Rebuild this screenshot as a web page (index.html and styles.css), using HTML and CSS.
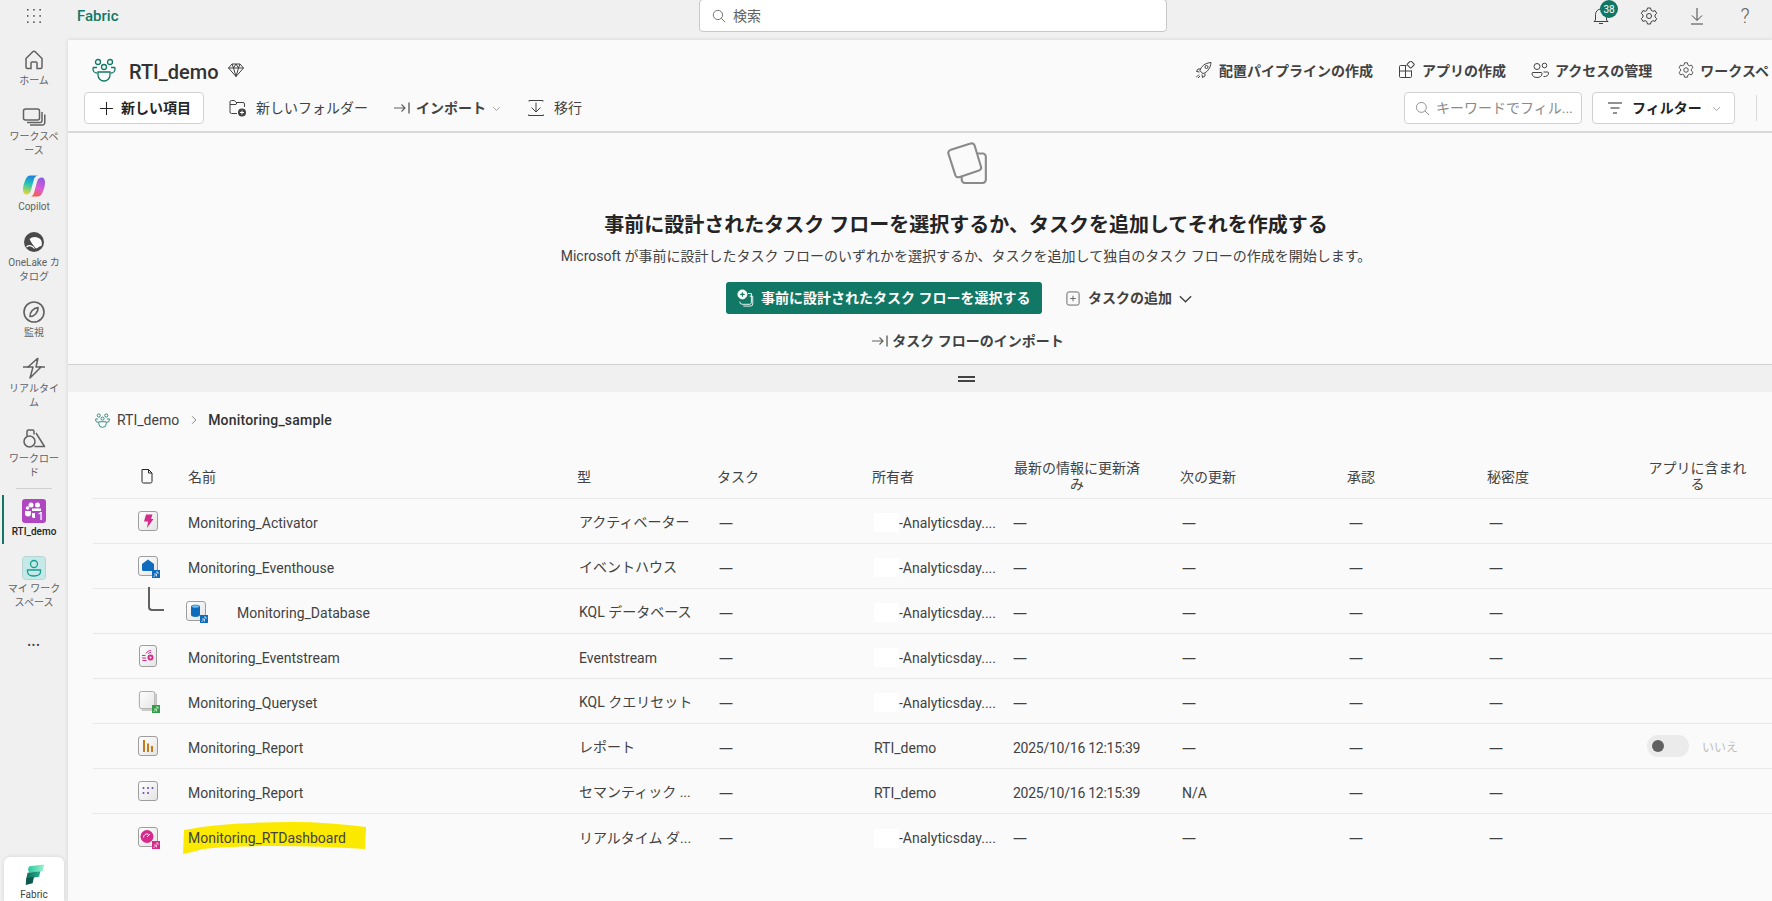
FILE: index.html
```html
<!DOCTYPE html>
<html lang="ja">
<head>
<meta charset="utf-8">
<title>Fabric - RTI_demo</title>
<link rel="stylesheet" href="styles.css">
</head>
<body>
<svg class="sprite" aria-hidden="true">
  <defs>
    <linearGradient id="cpA" x1="0.5" y1="0" x2="0.3" y2="1"><stop offset="0" stop-color="#1b7fe0"/><stop offset=".45" stop-color="#23c7b5"/><stop offset="1" stop-color="#e6d73a"/></linearGradient>
    <linearGradient id="cpB" x1="0.8" y1="0" x2="0.3" y2="1"><stop offset="0" stop-color="#8a5ce6"/><stop offset=".55" stop-color="#e05bd0"/><stop offset="1" stop-color="#f2603a"/></linearGradient>
    <linearGradient id="fbA" x1="0" y1="0" x2="1" y2="0"><stop offset="0" stop-color="#2ac9a0"/><stop offset="1" stop-color="#9af0cf"/></linearGradient>
    <linearGradient id="fbB" x1="0" y1="0" x2="1" y2="0"><stop offset="0" stop-color="#0c6b57"/><stop offset="1" stop-color="#27b08f"/></linearGradient>
    <linearGradient id="tile" x1="0" y1="0" x2="1" y2="1"><stop offset="0" stop-color="#ffffff"/><stop offset="1" stop-color="#e4e4e4"/></linearGradient>
  </defs>
  <symbol id="i-grid" viewBox="0 0 16 16"><g fill="currentColor"><rect x="1" y="1" width="1.5" height="1.5"/><rect x="7.2" y="1" width="1.5" height="1.5"/><rect x="13.4" y="1" width="1.5" height="1.5"/><rect x="1" y="7.2" width="1.5" height="1.5"/><rect x="7.2" y="7.2" width="1.5" height="1.5"/><rect x="13.4" y="7.2" width="1.5" height="1.5"/><rect x="1" y="13.4" width="1.5" height="1.5"/><rect x="7.2" y="13.4" width="1.5" height="1.5"/><rect x="13.4" y="13.4" width="1.5" height="1.5"/></g></symbol>
  <symbol id="i-search" viewBox="0 0 16 16"><g fill="none" stroke="currentColor" stroke-width="1"><circle cx="6.8" cy="6.8" r="5.3"/><path d="m10.6 10.6 4.4 4.4"/></g></symbol>
  <symbol id="i-bell" viewBox="0 0 20 20"><path d="M4.5 14V8.5a5.5 5.5 0 0 1 11 0V14l1.500 1.500h-14zM8 17.500h4" fill="none" stroke="currentColor"/></symbol>
  <symbol id="i-gear" viewBox="0 0 20 20"><g fill="none" stroke="currentColor"><circle cx="10" cy="10" r="2.500"/><path d="M8.400 2h3.200l.5 2.300 1.700 1 2.300-.7 1.600 2.800-1.700 1.600v2l1.700 1.600-1.600 2.800-2.300-.7-1.700 1-.5 2.300H8.400l-.5-2.300-1.700-1-2.300.7-1.600-2.800 1.700-1.600v-2L2.300 7.400l1.600-2.800 2.300.7 1.700-1z" stroke-linejoin="round"/></g></symbol>
  <symbol id="i-down" viewBox="0 0 20 20"><path d="M10 2v12M5 9.500l5 5 5-5M4 18h12" fill="none" stroke="currentColor"/></symbol>
  <symbol id="i-home" viewBox="0 0 24 24"><path d="M4 10.500 10.500 4a2.200 2.200 0 0 1 3 0L20 10.500V19a1.500 1.500 0 0 1-1.500 1.500H15V15a1 1 0 0 0-1-1h-4a1 1 0 0 0-1 1v5.500H5.500A1.500 1.500 0 0 1 4 19z" fill="none" stroke="currentColor" stroke-width="1.500"/></symbol>
  <symbol id="i-stack" viewBox="0 0 24 24"><g fill="none" stroke="currentColor" stroke-width="1.500"><rect x="1.500" y="5" width="16" height="11" rx="2"/><path d="M20 8v8.500a2 2 0 0 1-2 2H5M22.800 10.500v8a2.500 2.500 0 0 1-2.500 2.500H8"/></g></symbol>
  <symbol id="i-copilot" viewBox="0 0 24 24"><path d="M8 1.500h8.500c-2.400 0-3.700 1.200-4.500 3.600L8.800 16.800C8 19.300 6.600 20.500 4.400 20.500 2 20.500 1 18.500 1 15.500 1 11.500 2.500 7.500 4 4.500 5.200 2.500 6.500 1.500 8 1.500Z" fill="url(#cpA)"/><path d="M16 22.500H7.500c2.400 0 3.700-1.200 4.500-3.600l3.200-11.700C16 4.700 17.400 3.500 19.600 3.500 22 3.500 23 5.500 23 8.500 23 12.500 21.500 16.500 20 19.500 18.800 21.500 17.500 22.500 16 22.500Z" fill="url(#cpB)"/></symbol>
  <symbol id="i-lake" viewBox="0 0 24 24"><circle cx="12" cy="12" r="10" fill="#4a4a4a"/><path d="M7.500 9c3-2.500 8-3 11.500 1 1 1.500 1 4 .5 6-2 0-3.500 2-5.500 2.500-2.500-3-5-6-6.500-9.500Z" fill="#fff"/><path d="M4.500 17c3-2.500 6-1 8 1.500" fill="none" stroke="#fff" stroke-width="1.200"/></symbol>
  <symbol id="i-monitor" viewBox="0 0 24 24"><g fill="none" stroke="currentColor" stroke-width="1.600"><circle cx="12" cy="12" r="10"/><path d="M8 16.500c-.5-4 3-8.500 8-9 .5 4.500-3.500 9-8 9Z"/></g></symbol>
  <symbol id="i-bolt" viewBox="0 0 24 24"><g fill="none" stroke="currentColor" stroke-width="1.500" stroke-linejoin="round"><path d="M16 2 6 11h5L8 22l11-11h-5l2-9"/><path d="M1 11h6M17 11h6"/></g></symbol>
  <symbol id="i-shapes" viewBox="0 0 24 24"><g fill="none" stroke="currentColor" stroke-width="1.500" stroke-linejoin="round"><circle cx="7.500" cy="15.500" r="5.500"/><path d="M5 10V5.500A1.500 1.500 0 0 1 6.500 4h4A1.500 1.500 0 0 1 12 5.500v3"/><path d="m14 7 8.500 13.500H12.500"/></g></symbol>
  <symbol id="i-ws" viewBox="0 0 24 24"><g fill="none" stroke="#117865" stroke-width="1.300"><circle cx="6" cy="4" r="2.500"/><circle cx="18" cy="4" r="2.500"/><circle cx="12" cy="9" r="2.500"/><path d="M1 9.500h4M19 9.500h4M1 9.500v1.500a4 4 0 0 0 4 4M23 9.500v1.500a4 4 0 0 1-4 4"/><path d="M6 14h12v3a6 6 0 0 1-6 6 6 6 0 0 1-6-6z"/></g></symbol>
  <symbol id="i-diamond" viewBox="0 0 16 16"><path d="M4 2h8l3.500 4L8 14.500.5 6zM.5 6h15M5.500 6 8 14.500 10.500 6 8 2 5.500 6M4 2l1.500 4M12 2l-1.500 4" fill="none" stroke="currentColor" stroke-linejoin="round"/></symbol>
  <symbol id="i-plus" viewBox="0 0 16 16"><path d="M8 1v14M1 8h14" stroke="currentColor" fill="none" stroke-width="1.100"/></symbol>
  <symbol id="i-folder" viewBox="0 0 18 18"><path d="M8 14.500H2.500A1.500 1.500 0 0 1 1 13V3a1.500 1.500 0 0 1 1.500-1.500h3L7 3.500h7A1.500 1.500 0 0 1 15.500 5v3M1 5.500h6L8 3.500" fill="none" stroke="currentColor"/><circle cx="13" cy="13.500" r="4" fill="#424242"/><path d="M13 11.500v4M11 13.500h4" stroke="#fff"/></symbol>
  <symbol id="i-import" viewBox="0 0 16 16"><path d="M0 8h11M7.500 4.500 11 8l-3.500 3.500" fill="none" stroke="#616161" stroke-width="1.200"/><path d="M15 2.500v11" stroke="#242424"/></symbol>
  <symbol id="i-chev" viewBox="0 0 16 16"><path d="m2 5.500 6 6 6-6" fill="none" stroke="currentColor" stroke-width="1"/></symbol>
  <symbol id="i-chev-b" viewBox="0 0 16 16"><path d="m2 5.500 6 6 6-6" fill="none" stroke="currentColor" stroke-width="1.500"/></symbol>
  <symbol id="i-migrate" viewBox="0 0 18 18"><path d="M2 1.500h14M2 1.500v1M16 1.500v1M9 3.500V13M4.500 8.500 9 13l4.500-4.500M1.500 16.500h15M1.500 16.500v-1M16.500 16.500v-1" fill="none" stroke="currentColor"/></symbol>
  <symbol id="i-rocket" viewBox="0 0 18 18"><g fill="none" stroke="currentColor"><path d="M6.500 11.500 5 9.500c1-4 5-7.500 11-8-.5 6-4 10-8 11z"/><circle cx="11.500" cy="6" r="1.500"/><path d="M5.500 8H3l-1.500 2.500L4.500 11M10 12.500v2.500L7.500 16.500 7 13.500M1 16.500l3-3M3 17l2-2"/></g></symbol>
  <symbol id="i-app" viewBox="0 0 18 18"><g fill="none" stroke="currentColor"><path d="M8.500 4.500H2.500A1 1 0 0 0 1.500 5.500v10a1 1 0 0 0 1 1h10a1 1 0 0 0 1-1V9.500M1.500 10h12M7.500 4.500v12"/><rect x="10" y="0.800" width="5.500" height="5.500" rx="1" transform="rotate(45 12.800 3.500)"/></g></symbol>
  <symbol id="i-people" viewBox="0 0 18 18"><g fill="none" stroke="currentColor"><circle cx="6" cy="5.500" r="3"/><circle cx="13.500" cy="4.500" r="2.300"/><path d="M1 12.500a1 1 0 0 1 1-1h8a1 1 0 0 1 1 1c0 2.500-2 4-5 4s-5-1.500-5-4ZM12.500 15.500c3 .3 5-1 5-3.500a1 1 0 0 0-1-1h-4"/></g></symbol>
  <symbol id="i-filter" viewBox="0 0 16 16"><path d="M1 3h14M3.500 8h9M6 13h4" stroke="currentColor" fill="none"/></symbol>
  <symbol id="i-pages" viewBox="0 0 40 40"><g fill="none" stroke="#8a8a8a" stroke-width="2"><path d="M26 11h8a3 3 0 0 1 3 3v22a3 3 0 0 1-3 3H17a3 3 0 0 1-3-3v-3"/><path d="M3 7.700 22.500 1.500a3 3 0 0 1 3.800 1.800l6 20a3 3 0 0 1-1.800 3.800L11.500 33.500A3 3 0 0 1 8 31.700L1.500 11.500A3 3 0 0 1 3 7.700Z" fill="#fafafa"/></g></symbol>
  <symbol id="i-flow" viewBox="0 0 20 20"><g fill="none" stroke="#fff"><circle cx="6" cy="6" r="5" fill="#fff"/><path d="M6 3.500v5M3.500 6h5" stroke="#117865" stroke-width="1.300"/><path d="M12 5h4v10a2 2 0 0 1-2 2H6a3 3 0 0 1-3-3M14 8h3.500v8.500a2.500 2.500 0 0 1-2.500 2.500H7"/></g></symbol>
  <symbol id="i-addtask" viewBox="0 0 14 16"><g fill="none" stroke="currentColor"><rect x="0.500" y="1" width="13" height="14" rx="2"/><path d="M7 5v6M4 8h6"/></g></symbol>
  <symbol id="i-file" viewBox="0 0 16 16"><path d="M3 1.500h6.500L13 5v8.500a1.500 1.500 0 0 1-1.500 1.500h-7A1.500 1.500 0 0 1 3 13.500zM9.500 1.500V5H13" fill="none" stroke="#242424" stroke-width="1"/></symbol>
  <symbol id="i-chevr" viewBox="0 0 16 16"><path d="m5 2 6 6-6 6" fill="none" stroke="currentColor"/></symbol>
  <symbol id="i-me" viewBox="0 0 24 24"><rect x=".5" y=".5" width="23" height="23" rx="3" fill="#c5e9e7" stroke="#b5d6d4"/><g fill="none" stroke="#1a9c94" stroke-width="1.300"><circle cx="12" cy="8" r="3.500"/><path d="M5.500 14h13v1.500c0 3-3 4.500-6.500 4.500s-6.500-1.500-6.500-4.500z"/></g></symbol>
  <symbol id="i-fabric" viewBox="0 0 24 24"><path d="M7 2.500 23 0.500l-1.500 7L7 9.500a5 5 0 0 1 0-7Z" fill="url(#fbA)"/><path d="M5 9.500 19 8l-1.500 6L3.500 16Z" fill="url(#fbB)"/><path d="M3.500 15.500 12 14l-1.500 7-7.500 2Z" fill="#0b5a4c"/></symbol>
  <symbol id="b-tile" viewBox="0 0 20 20"><rect x=".5" y=".5" width="19" height="19" rx="2.500" fill="url(#tile)" stroke="#9e9e9e"/></symbol>
  <symbol id="t-activator" viewBox="0 0 20 20"><use href="#b-tile"/><path d="M8 3.500h6.500l-1.500 4.500H15.500l-6.500 9 1-6.500H6z" fill="#d52c8c"/></symbol>
  <symbol id="t-house" viewBox="0 0 20 20"><use href="#b-tile"/><path d="M10 3.500 16 8v5.500q0 1.500-1.500 1.500h-9Q4 15 4 13.500V8z" fill="#0f6cbd"/></symbol>
  <symbol id="t-db" viewBox="0 0 20 20"><use href="#b-tile"/><path d="M5 5.500c0-2.500 9-2.500 9 0V14c0 2.500-9 2.500-9 0z" fill="#0f6cbd"/><ellipse cx="9.500" cy="5.500" rx="3.500" ry="1.200" fill="#6fc0f0"/></symbol>
  <symbol id="t-stream" viewBox="0 0 18 22"><rect x=".5" y=".5" width="17" height="21" rx="2.500" fill="url(#tile)" stroke="#9e9e9e"/><g fill="none" stroke="#d52c8c"><path d="M3 13h4M3 10.500h3.500M3.500 15.500h4M7 8.500c1-2 3-3 5-3M9 9c.5-1 1.500-1.500 3-1.500"/></g><circle cx="11.500" cy="12.500" r="3" fill="#d52c8c"/><circle cx="11.500" cy="12.500" r="1" fill="#fff"/></symbol>
  <symbol id="t-query" viewBox="0 0 20 22"><path d="M3 21h14a2 2 0 0 0 2-2V3" fill="none" stroke="#9e9e9e"/><rect x=".5" y=".5" width="17" height="19" rx="2.500" fill="url(#tile)" stroke="#9e9e9e"/></symbol>
  <symbol id="t-report" viewBox="0 0 20 20"><use href="#b-tile"/><g fill="#c27c1a"><rect x="5" y="4" width="2" height="12"/><rect x="9" y="7.500" width="2" height="8.500"/><rect x="13" y="10" width="2" height="6"/></g></symbol>
  <symbol id="t-model" viewBox="0 0 20 20"><use href="#b-tile"/><g fill="#6b45bc"><circle cx="5.500" cy="7" r="1"/><circle cx="10" cy="7" r="1"/><circle cx="14.500" cy="7" r="1"/><circle cx="5.500" cy="12" r="1"/><circle cx="10" cy="12" r="1"/></g></symbol>
  <symbol id="t-dash" viewBox="0 0 20 20"><use href="#b-tile"/><circle cx="9" cy="9.500" r="6.500" fill="#d52c8c"/><path d="M5.500 10.500a3.500 3.500 0 0 1 5-3.200M9 10l3-3" fill="none" stroke="#fff"/></symbol>
  <symbol id="t-link" viewBox="0 0 8 8"><rect width="8" height="8" fill="currentColor"/><path d="M1.500 7 4 4.500M2 4h2.500v2.500M4 2h2v2" stroke="#fff" fill="none" stroke-width=".7"/></symbol>
</svg>

<header class="topbar">
  <span class="waffle"><svg class="ic16"><use href="#i-grid"/></svg></span>
  <span class="brand">Fabric</span>
  <div class="global-search"><svg class="ic14"><use href="#i-search"/></svg><span class="up">検索</span></div>
  <div class="top-icons">
    <span class="top-icon bell"><svg class="ic20"><use href="#i-bell"/></svg><b class="badge">38</b></span>
    <span class="top-icon"><svg class="ic20"><use href="#i-gear"/></svg></span>
    <span class="top-icon"><svg class="ic20"><use href="#i-down"/></svg></span>
    <span class="top-icon help">?</span>
  </div>
</header>

<div class="shell">
  <nav class="rail">
    <a class="rail-item"><svg class="ic24"><use href="#i-home"/></svg><span>ホーム</span></a>
    <a class="rail-item"><svg class="ic24"><use href="#i-stack"/></svg><span>ワークスペ<br>ース</span></a>
    <a class="rail-item"><svg class="ic24"><use href="#i-copilot"/></svg><span>Copilot</span></a>
    <a class="rail-item"><svg class="ic24"><use href="#i-lake"/></svg><span>OneLake カ<br>タログ</span></a>
    <a class="rail-item"><svg class="ic24"><use href="#i-monitor"/></svg><span>監視</span></a>
    <a class="rail-item"><svg class="ic24"><use href="#i-bolt"/></svg><span>リアルタイ<br>ム</span></a>
    <a class="rail-item"><svg class="ic24"><use href="#i-shapes"/></svg><span>ワークロー<br>ド</span></a>
    <hr class="rail-sep">
    <a class="rail-item active">
      <svg class="ic24" viewBox="0 0 24 24"><rect width="24" height="24" rx="3" fill="#b146c2"/><g fill="#fff"><circle cx="9" cy="6" r="2.500"/><circle cx="15.500" cy="6" r="2.500"/><circle cx="5.500" cy="9" r="1.800"/><path d="M3 12h6v2.500a3 3 0 0 1-6 0zM10 9.500h9v2.500h-9zM10 14h3v5h-2a2 2 0 0 1-1-2z"/></g><text x="15.500" y="21" font-size="11" fill="#fff" font-family="Noto Sans">1</text></svg>
      <span>RTI_demo</span>
    </a>
    <a class="rail-item"><svg class="ic24"><use href="#i-me"/></svg><span>マイ ワーク<br>スペース</span></a>
    <a class="rail-more">•••</a>
    <a class="rail-fabric"><svg class="ic24"><use href="#i-fabric"/></svg><span>Fabric</span></a>
  </nav>

  <main class="main">
    <section class="head">
      <div class="title-row">
        <svg class="ic24"><use href="#i-ws"/></svg>
        <h1>RTI_demo</h1>
        <svg class="ic16 diamond"><use href="#i-diamond"/></svg>
        <div class="actions">
          <a class="action"><svg class="a-ic"><use href="#i-rocket"/></svg>配置パイプラインの作成</a>
          <a class="action"><svg class="a-ic"><use href="#i-app"/></svg>アプリの作成</a>
          <a class="action"><svg class="a-ic"><use href="#i-people"/></svg>アクセスの管理</a>
          <a class="action action-gear"><svg class="gear-lg"><use href="#i-gear"/></svg><span>ワークスペ</span></a>
        </div>
      </div>
      <div class="toolbar">
        <button class="btn-new"><svg class="ic15"><use href="#i-plus"/></svg><span class="up">新しい項目</span></button>
        <a class="tool"><svg class="ic18"><use href="#i-folder"/></svg><span class="up">新しいフォルダー</span></a>
        <a class="tool tool-b"><svg class="ic16"><use href="#i-import"/></svg><b class="up">インポート</b><svg class="chev"><use href="#i-chev"/></svg></a>
        <a class="tool"><svg class="ic18"><use href="#i-migrate"/></svg><span class="up">移行</span></a>
        <div class="filter-input"><svg class="ic15"><use href="#i-search"/></svg><span class="up">キーワードでフィル...</span></div>
        <button class="btn-filter"><svg class="ic16"><use href="#i-filter"/></svg><b class="up">フィルター</b><svg class="chev chev-f"><use href="#i-chev"/></svg></button>
        <span class="tool-sep"></span>
      </div>
    </section>

    <section class="flow">
      <svg class="flow-art"><use href="#i-pages"/></svg>
      <h2>事前に設計されたタスク フローを選択するか、タスクを追加してそれを作成する</h2>
      <p>Microsoft が事前に設計したタスク フローのいずれかを選択するか、タスクを追加して独自のタスク フローの作成を開始します。</p>
      <div class="flow-btns">
        <button class="btn-primary"><svg class="ic18"><use href="#i-flow"/></svg><span class="up">事前に設計されたタスク フローを選択する</span></button>
        <a class="btn-add"><svg class="add-ic"><use href="#i-addtask"/></svg><span class="up">タスクの追加</span><svg class="chev-lg"><use href="#i-chev-b"/></svg></a>
      </div>
      <a class="flow-import"><svg class="ic16"><use href="#i-import"/></svg>タスク フローのインポート</a>
    </section>

    <div class="resizer"><i></i></div>

    <section class="list">
      <div class="crumbs">
        <svg class="ic15"><use href="#i-ws"/></svg>
        <span>RTI_demo</span>
        <svg class="crumb-sep"><use href="#i-chevr"/></svg>
        <b>Monitoring_sample</b>
      </div>
      <div class="row row-head">
        <span class="c-icon"><svg class="ic16"><use href="#i-file"/></svg></span>
        <span>名前</span><span>型</span><span>タスク</span><span>所有者</span>
        <span class="wrap-h">最新の情報に更新済み</span>
        <span>次の更新</span><span>承認</span><span>秘密度</span>
        <span class="wrap-app">アプリに含まれる</span>
      </div>

      <div class="row">
        <span class="c-icon"><svg class="ic20"><use href="#t-activator"/></svg></span>
        <span class="l">Monitoring_Activator</span><span class="c">アクティベーター</span><span class="c l dash">—</span>
        <span class="c l owner"><i></i><em>-Analyticsday....</em></span><span class="l dash">—</span><span class="c l dash">—</span><span class="c l dash">—</span><span class="c l dash">—</span><span></span>
      </div>
      <div class="row">
        <span class="c-icon"><span class="linked blue"><svg class="ic20"><use href="#t-house"/></svg><svg class="lk"><use href="#t-link"/></svg></span></span>
        <span class="l">Monitoring_Eventhouse</span><span class="c">イベントハウス</span><span class="c l dash">—</span>
        <span class="c l owner"><i></i><em>-Analyticsday....</em></span><span class="l dash">—</span><span class="c l dash">—</span><span class="c l dash">—</span><span class="c l dash">—</span><span></span>
      </div>
      <div class="row row-sub">
        <i class="tree"></i>
        <span class="c-icon"><span class="linked blue"><svg class="ic20"><use href="#t-db"/></svg><svg class="lk"><use href="#t-link"/></svg></span></span>
        <span class="l sub-name">Monitoring_Database</span><span class="c">KQL データベース</span><span class="c l dash">—</span>
        <span class="c l owner"><i></i><em>-Analyticsday....</em></span><span class="l dash">—</span><span class="c l dash">—</span><span class="c l dash">—</span><span class="c l dash">—</span><span></span>
      </div>
      <div class="row">
        <span class="c-icon"><svg class="stream"><use href="#t-stream"/></svg></span>
        <span class="l">Monitoring_Eventstream</span><span class="c l">Eventstream</span><span class="c l dash">—</span>
        <span class="c l owner"><i></i><em>-Analyticsday....</em></span><span class="l dash">—</span><span class="c l dash">—</span><span class="c l dash">—</span><span class="c l dash">—</span><span></span>
      </div>
      <div class="row">
        <span class="c-icon"><span class="linked green"><svg class="ic20"><use href="#t-query"/></svg><svg class="lk"><use href="#t-link"/></svg></span></span>
        <span class="l">Monitoring_Queryset</span><span class="c">KQL クエリセット</span><span class="c l dash">—</span>
        <span class="c l owner"><i></i><em>-Analyticsday....</em></span><span class="l dash">—</span><span class="c l dash">—</span><span class="c l dash">—</span><span class="c l dash">—</span><span></span>
      </div>
      <div class="row">
        <span class="c-icon"><svg class="ic20"><use href="#t-report"/></svg></span>
        <span class="l">Monitoring_Report</span><span class="c">レポート</span><span class="c l dash">—</span>
        <span class="c l">RTI_demo</span><span class="l date">2025/10/16 12:15:39</span><span class="c l dash">—</span><span class="c l dash">—</span><span class="c l dash">—</span>
        <span class="toggle-cell"><span class="toggle"><i></i></span><small>いいえ</small></span>
      </div>
      <div class="row">
        <span class="c-icon"><svg class="ic20"><use href="#t-model"/></svg></span>
        <span class="l">Monitoring_Report</span><span class="c">セマンティック ...</span><span class="c l dash">—</span>
        <span class="c l">RTI_demo</span><span class="l date">2025/10/16 12:15:39</span><span class="c l">N/A</span><span class="c l dash">—</span><span class="c l dash">—</span><span></span>
      </div>
      <div class="row row-last">
        <span class="c-icon"><span class="linked pink"><svg class="ic20"><use href="#t-dash"/></svg><svg class="lk"><use href="#t-link"/></svg></span></span>
        <span class="l marked"><svg class="marker" viewBox="0 0 184 34" preserveAspectRatio="none"><path d="M1 9C30 3 70 1 110 1c25 0 50 2 73 5l-1 22c-30-2-60-3-90-3-30 0-55 1-72 3C12 30 6 32 0 33z" fill="#fce900"/></svg><span>Monitoring_RTDashboard</span></span>
        <span class="c">リアルタイム ダ...</span><span class="c l dash">—</span>
        <span class="c l owner"><i></i><em>-Analyticsday....</em></span><span class="l dash">—</span><span class="c l dash">—</span><span class="c l dash">—</span><span class="c l dash">—</span><span></span>
      </div>
    </section>
  </main>
</div>
</body>
</html>
```
FILE: styles.css
```css
* { box-sizing: border-box; }
html, body { margin: 0; height: 901px; overflow: hidden; }
body {
  background: #f0f0f0;
  color: #424242;
  font-family: Roboto, "Noto Sans CJK JP", sans-serif;
  font-size: 14px;
  display: flex;
  flex-direction: column;
}
h1, h2, p { margin: 0; }
a { color: inherit; }
svg { display: block; flex: none; }
.sprite { position: absolute; width: 0; height: 0; }
.ic14 { width: 14px; height: 14px; }
.ic15 { width: 15px; height: 15px; }
.ic16 { width: 16px; height: 16px; }
.ic18 { width: 18px; height: 18px; }
.ic20 { width: 20px; height: 20px; }
.ic24 { width: 24px; height: 24px; }
.chev { width: 9px; height: 9px; color: #616161; }
.up { padding-bottom: 2px; }

/* top bar */
.topbar { height: 40px; flex: none; display: flex; align-items: center; position: relative; padding-bottom: 8px; }
.waffle { width: 68px; display: flex; justify-content: center; color: #424242; }
.brand { margin-left: 9px; color: #117865; font-weight: 500; font-size: 15px; }
.global-search {
  position: absolute; left: 699px; top: -1px; width: 468px; height: 33px;
  background: #fff; border: 1px solid #c8c8c8; border-radius: 4px;
  display: flex; align-items: center; gap: 7px; padding-left: 12px; color: #616161;
}
.top-icons { margin-left: auto; display: flex; padding-right: 3px; }
.top-icon { width: 48px; height: 32px; display: flex; align-items: center; justify-content: center; color: #424242; position: relative; }
.top-icon.help { font-size: 20px; color: #616161; font-weight: 300; }
.badge {
  position: absolute; left: 23px; top: 0; width: 18px; height: 18px; border-radius: 50%;
  background: #117865; color: #fff; font-size: 10px; font-weight: 400;
  display: flex; align-items: center; justify-content: center;
}

/* shell */
.shell { flex: 1; display: flex; min-height: 0; }
.rail { width: 68px; flex: none; display: flex; flex-direction: column; align-items: center; padding-top: 8px; gap: 16px; height: 861px; }
.rail-item { width: 68px; display: flex; flex-direction: column; align-items: center; gap: 2px; color: #616161; font-size: 10px; line-height: 14px; text-align: center; position: relative; }
.rail-sep { width: 36px; height: 1px; border: 0; background: #d1d1d1; margin: -8px 0 -6px; flex: none; }
.rail-item.active { color: #242424; font-weight: 500; margin-bottom: 1px; }
.rail-item.active::before { content: ""; position: absolute; left: 2px; top: -4px; bottom: -5px; width: 2px; background: #117865; }
.rail-more { font-size: 10px; letter-spacing: 1px; color: #424242; margin-top: 13px; line-height: 14px; }
.rail-fabric { margin-top: auto; width: 60px; height: 44px; background: #fff; border-radius: 6px 6px 0 0; display: flex; flex-direction: column; align-items: center; padding-top: 7px; font-size: 10px; line-height: 13px; color: #424242; box-shadow: 0 0 4px rgba(0,0,0,.12); overflow: hidden; flex: none; }
.rail-fabric .ic24 { width: 22px; height: 22px; margin-bottom: 2px; }

/* main */
.main { flex: 1; min-width: 0; background: #fafafa; display: flex; flex-direction: column; box-shadow: 0 0 4px rgba(0,0,0,.12); overflow: hidden; }
.head { height: 93px; flex: none; border-bottom: 2px solid #d9d9d9; }
.title-row { height: 52px; display: flex; align-items: center; padding: 8px 0 0 24px; white-space: nowrap; }
h1 { font-size: 20px; font-weight: 500; margin: 4px 0 0 13px; color: #323232; line-height: 28px; }
.diamond { margin-left: 10px; color: #424242; }
.actions { margin-left: auto; width: 576px; flex: none; display: flex; gap: 26px; overflow: hidden; color: #424242; font-weight: 700; }
.action { display: flex; align-items: center; gap: 7px; flex: none; }
.a-ic { width: 18px; height: 18px; margin: 0 -1px; }
.action-gear { gap: 5px; margin-left: -1px; }
.gear-lg { width: 18px; height: 18px; }
.toolbar { height: 32px; display: flex; align-items: center; padding: 0 15px 0 16px; white-space: nowrap; }
.btn-new, .btn-filter { height: 32px; background: #fff; border: 1px solid #d1d1d1; border-radius: 4px; font: inherit; color: #242424; display: flex; align-items: center; }
.btn-new { width: 120px; padding-left: 14px; gap: 7px; font-weight: 700; margin-right: 25px; }
.tool { display: flex; align-items: center; gap: 9px; margin-right: 26px; color: #424242; }
.tool-b { gap: 6px; }
.tool b { color: #424242; }
.filter-input { margin-left: auto; width: 178px; height: 32px; background: #fff; border: 1px solid #d1d1d1; border-radius: 4px; display: flex; align-items: center; gap: 6px; padding-left: 10px; color: #8a8a8a; overflow: hidden; }
.btn-filter { width: 143px; margin-left: 10px; padding-left: 14px; gap: 9px; }
.chev-f { margin-left: 1px; }
.tool-sep { width: 1px; height: 26px; background: #d9d9d9; margin-left: 21px; }

/* task flow */
.flow { height: 231px; flex: none; display: flex; flex-direction: column; align-items: center; padding: 9px 0 0 92px; }
.flow-art { width: 42px; height: 42px; margin: 0 0 -2px 4px; }
.flow h2 { margin-top: 28px; font-size: 20px; line-height: 30px; font-weight: 700; color: #242424; white-space: nowrap; }
.flow p { margin-top: 5px; line-height: 22px; color: #424242; white-space: nowrap; }
.flow-btns { margin-top: 15px; display: flex; align-items: center; padding-right: 13px; }
.btn-primary { width: 316px; height: 32px; background: #117865; border: 0; border-radius: 3px; color: #fff; font: inherit; font-weight: 700; display: flex; align-items: center; gap: 6px; padding-left: 11px; white-space: nowrap; }
.btn-add { display: flex; align-items: center; margin-left: 24px; font-weight: 700; color: #424242; gap: 8px; }
.add-ic { width: 14px; height: 15px; color: #616161; }
.chev-lg { width: 15px; height: 15px; color: #424242; margin-left: -2px; }
.flow-import { margin-top: 17px; margin-left: 4px; display: flex; align-items: center; gap: 4px; font-weight: 700; color: #424242; line-height: 20px; }

.resizer { height: 28px; flex: none; background: #f0f0f0; border-top: 1px solid #d1d1d1; display: flex; align-items: center; justify-content: center; padding-left: 92px; }
.resizer i { display: block; width: 17px; height: 6px; border-top: 2px solid #424242; border-bottom: 2px solid #424242; }

/* list */
.list { flex: 1; padding: 11px 0 0 25px; min-height: 0; }
.crumbs { height: 32px; display: flex; align-items: center; padding: 2px 0 0 2px; gap: 7px; }
.crumb-sep { width: 10px; height: 10px; margin: 0 2px 0 3px; color: #424242; }
.crumbs b { font-weight: 500; color: #323232; letter-spacing: .2px; }
.row {
  display: grid;
  grid-template-columns: 95px 389px 140px 155px 141px 167px 167px 140px 158px 105px;
  height: 45px; align-items: center; border-bottom: 1px solid #e8e8e8;
  position: relative; white-space: nowrap; color: #424242;
}
.row-head { height: 50px; margin-top: 14px; padding-top: 4px; }
.row-last { border-bottom: 0; }
.l { padding-top: 3px; }
.c-icon { display: flex; padding-left: 45px; }
.row-head .c-icon { padding-left: 46px; }
.c { padding-left: 2px; }
.dash { font-family: "Noto Sans", sans-serif; line-height: 20px; }
.date { letter-spacing: -.25px; }
.wrap-h { width: 128px; white-space: normal; text-align: center; line-height: 16px; }
.wrap-app { white-space: normal; text-align: center; line-height: 16px; width: 105px; }
.owner { display: flex; align-items: center; }
.owner i { width: 25px; height: 19px; background: #fff; }
.owner em { font-style: normal; }
.stream { width: 18px; height: 22px; margin-left: 1px; }
.linked { position: relative; display: block; width: 20px; height: 20px; }
.lk { position: absolute; right: -2px; bottom: -2px; width: 8px; height: 8px; }
.blue { color: #0f6cbd; }
.green { color: #2f9e44; }
.pink { color: #d52c8c; }
.row-sub .c-icon { padding-left: 93px; }
.sub-name { padding-left: 49px; }
.tree { position: absolute; left: 55px; top: -2px; width: 16px; height: 24px; border-left: 2px solid #616161; border-bottom: 2px solid #616161; border-bottom-left-radius: 4px; }
.marked { position: relative; }
.marked span { position: relative; }
.marker { position: absolute; left: -5px; top: -6px; width: 184px; height: 34px; }
.toggle-cell { display: flex; align-items: center; gap: 13px; margin-left: 2px; }
.toggle { width: 42px; height: 22px; border-radius: 11px; background: #ebebeb; display: flex; align-items: center; padding-left: 5px; }
.toggle i { width: 12px; height: 12px; border-radius: 50%; background: #616161; }
.toggle-cell small { font-size: 12px; color: #bdbdbd; }
```
